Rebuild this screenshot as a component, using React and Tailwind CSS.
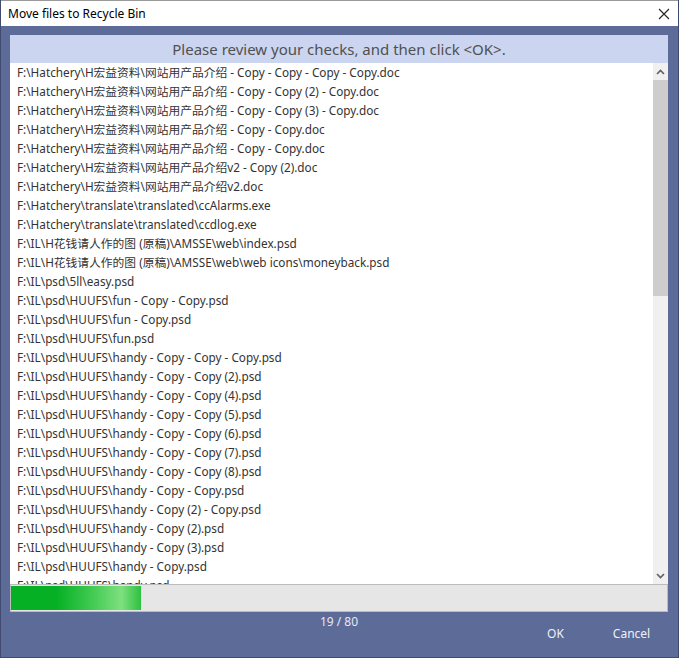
const rows = [
  "F:\\Hatchery\\H宏益资料\\网站用产品介绍 - Copy - Copy - Copy - Copy.doc",
  "F:\\Hatchery\\H宏益资料\\网站用产品介绍 - Copy - Copy (2) - Copy.doc",
  "F:\\Hatchery\\H宏益资料\\网站用产品介绍 - Copy - Copy (3) - Copy.doc",
  "F:\\Hatchery\\H宏益资料\\网站用产品介绍 - Copy - Copy.doc",
  "F:\\Hatchery\\H宏益资料\\网站用产品介绍 - Copy - Copy.doc",
  "F:\\Hatchery\\H宏益资料\\网站用产品介绍v2 - Copy (2).doc",
  "F:\\Hatchery\\H宏益资料\\网站用产品介绍v2.doc",
  "F:\\Hatchery\\translate\\translated\\ccAlarms.exe",
  "F:\\Hatchery\\translate\\translated\\ccdlog.exe",
  "F:\\IL\\H花钱请人作的图 (原稿)\\AMSSE\\web\\index.psd",
  "F:\\IL\\H花钱请人作的图 (原稿)\\AMSSE\\web\\web icons\\moneyback.psd",
  "F:\\IL\\psd\\5ll\\easy.psd",
  "F:\\IL\\psd\\HUUFS\\fun - Copy - Copy.psd",
  "F:\\IL\\psd\\HUUFS\\fun - Copy.psd",
  "F:\\IL\\psd\\HUUFS\\fun.psd",
  "F:\\IL\\psd\\HUUFS\\handy - Copy - Copy - Copy.psd",
  "F:\\IL\\psd\\HUUFS\\handy - Copy - Copy (2).psd",
  "F:\\IL\\psd\\HUUFS\\handy - Copy - Copy (4).psd",
  "F:\\IL\\psd\\HUUFS\\handy - Copy - Copy (5).psd",
  "F:\\IL\\psd\\HUUFS\\handy - Copy - Copy (6).psd",
  "F:\\IL\\psd\\HUUFS\\handy - Copy - Copy (7).psd",
  "F:\\IL\\psd\\HUUFS\\handy - Copy - Copy (8).psd",
  "F:\\IL\\psd\\HUUFS\\handy - Copy - Copy.psd",
  "F:\\IL\\psd\\HUUFS\\handy - Copy (2) - Copy.psd",
  "F:\\IL\\psd\\HUUFS\\handy - Copy (2).psd",
  "F:\\IL\\psd\\HUUFS\\handy - Copy (3).psd",
  "F:\\IL\\psd\\HUUFS\\handy - Copy.psd",
  "F:\\IL\\psd\\HUUFS\\handy.psd",
];

const font = { fontFamily: '"Noto Sans", "Noto Sans CJK SC", sans-serif' };

function Chevron({ down }) {
  return (
    <svg width="9" height="6" viewBox="0 0 9 6" className={down ? "rotate-180" : ""}>
      <path d="M1 5 L4.5 1.5 L8 5" fill="none" stroke="#606060" strokeWidth="1.6" />
    </svg>
  );
}

function ScrollBar() {
  return (
    <div className="w-[15px] h-full bg-[#f0f0f0] flex flex-col">
      <div className="h-[17px] flex items-center justify-center">
        <Chevron />
      </div>
      <div className="flex-1 flex flex-col">
        <div className="h-[216px] bg-[#cdcdcd]" />
      </div>
      <div className="h-[17px] flex items-center justify-center">
        <Chevron down />
      </div>
    </div>
  );
}

export default function App() {
  return (
    <div
      className="w-[679px] h-[658px] flex flex-col bg-[#5d6b99] border-x border-b border-[#3f4a6e] overflow-hidden"
      style={font}
    >
      <div className="h-[26px] shrink-0 bg-white flex items-center justify-between pl-[7px] pr-[8px] border-t border-[#9a9a9a]">
        <span className="text-[12px] text-black">Move files to Recycle Bin</span>
        <svg width="12" height="12" viewBox="0 0 12 12">
          <path d="M1 1 L11 11 M11 1 L1 11" stroke="#222" strokeWidth="1.1" />
        </svg>
      </div>

      <div className="flex-1 flex flex-col pt-[9px] pl-[9px] pr-[10px]">
        <div className="h-[28px] shrink-0 bg-[#cbd5f0] flex items-center justify-center text-[15px] text-[#505050]">
          Please review your checks, and then click &lt;OK&gt;.
        </div>

        <div className="h-[521px] shrink-0 bg-white flex">
          <div className="flex-1 overflow-hidden pl-[7px]">
            {rows.map((r, i) => (
              <div key={i} className="h-[19px] leading-[19px] text-[11.75px] text-[#333] whitespace-nowrap">
                {r}
              </div>
            ))}
          </div>
          <ScrollBar />
        </div>

        <div className="h-[28px] shrink-0 bg-[#e6e6e6] border border-[#bcbcbc] p-[1px] pl-0 flex">
          <div className="w-[130px] h-full bg-[linear-gradient(90deg,#06b025_0%,#06b025_35%,#3cc84e_60%,#7ee07f_85%,#2ec040_100%)]" />
        </div>

        <div className="text-center text-[12px] text-[#e4e8f4] mt-[2px] leading-[16px]">19 / 80</div>

        <div className="flex justify-end gap-[1px] -mr-[1px] -mt-[7px]">
          <div className="w-[75px] h-[22px] flex items-center justify-center text-[12px] text-[#eef0f8]">OK</div>
          <div className="w-[75px] h-[22px] flex items-center justify-center text-[12px] text-[#eef0f8]">Cancel</div>
        </div>
      </div>
    </div>
  );
}
